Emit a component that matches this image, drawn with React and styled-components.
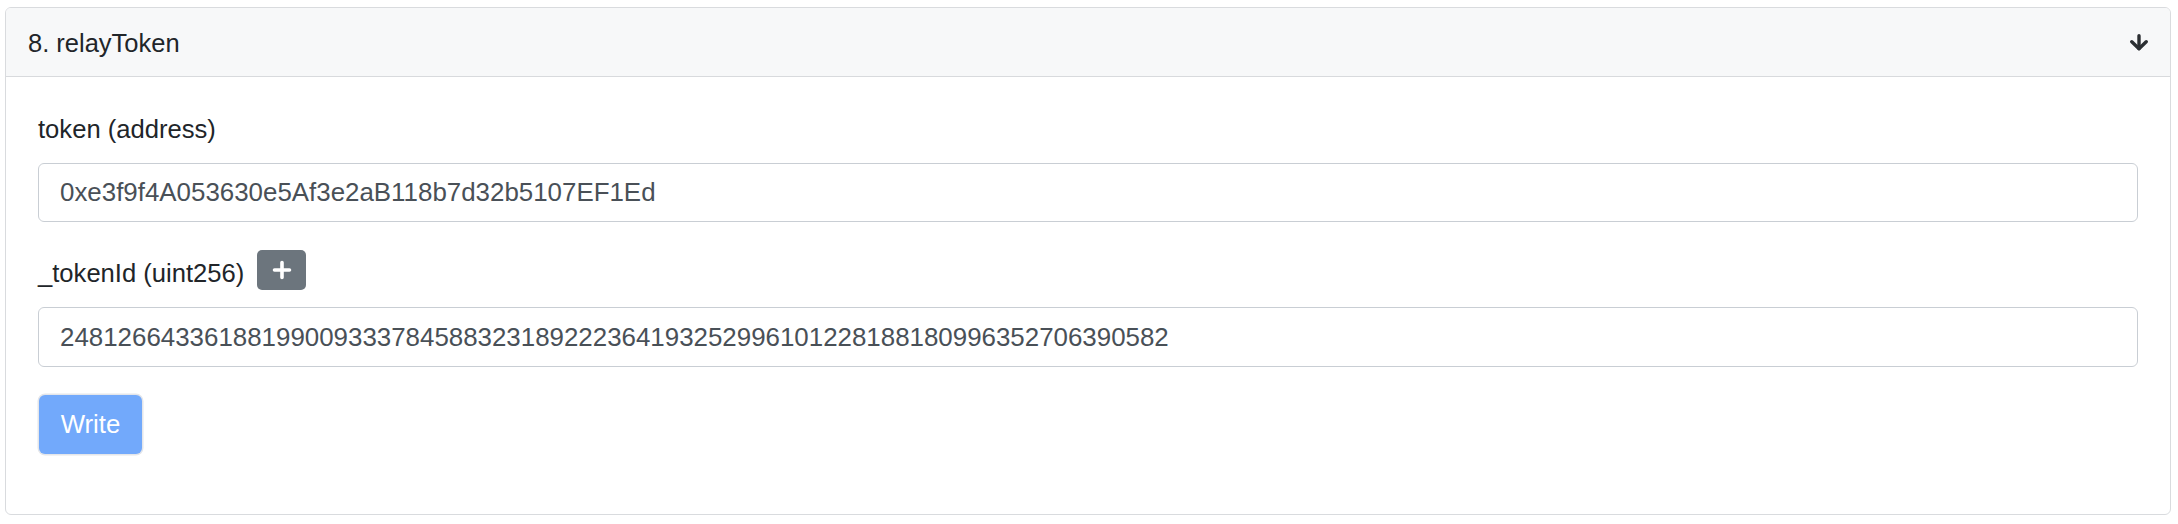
import React from "react";
import styled, { createGlobalStyle } from "styled-components";

const Global = createGlobalStyle`
  html, body { margin: 0; padding: 0; background: #ffffff; }
  body { font-family: "Liberation Sans", Arial, sans-serif; color: #212529; }
  * { box-sizing: border-box; }
`;

const Card = styled.section`
  margin: 7px 0 0 5px;
  width: 2166px;
  height: 508px;
  border: 1px solid #d9dbde;
  border-radius: 6px;
  background: #ffffff;
  overflow: hidden;
  display: flex;
  flex-direction: column;
`;

const Header = styled.header`
  height: 69px;
  flex: none;
  display: flex;
  align-items: center;
  justify-content: space-between;
  padding: 0 21px 0 22px;
  background: #f7f8f9;
  border-bottom: 1px solid #d8dadd;
  font-size: 25.5px;
  color: #212529;
`;

const Title = styled.span`
  line-height: 30px;
  padding-top: 1px;
`;

const Body = styled.div`
  padding: 37px 32px 0 32px;
  display: flex;
  flex-direction: column;
`;

const Field = styled.div`
  display: flex;
  flex-direction: column;
  margin-bottom: ${(p) => p.$gap}px;
`;

const LabelRow = styled.div`
  display: flex;
  align-items: center;
  height: ${(p) => p.$h}px;
  margin-bottom: ${(p) => p.$mb}px;
`;

const Label = styled.label`
  font-size: 25.6px;
  line-height: 30px;
  color: #212529;
  padding-top: ${(p) => p.$pt || 0}px;
`;

const AddButton = styled.button`
  margin-left: 13px;
  width: 49px;
  height: 40px;
  border: none;
  border-radius: 5px;
  background: #6c757d;
  display: flex;
  align-items: center;
  justify-content: center;
  padding: 0;
`;

const Input = styled.input`
  width: 100%;
  height: ${(p) => p.$h}px;
  border: 1px solid #c9ced4;
  border-radius: 6px;
  padding: 0 0 0 21px;
  font-family: "Liberation Sans", Arial, sans-serif;
  font-size: 25.9px;
  color: #495057;
  background: #ffffff;
  outline: none;
`;

const WriteButton = styled.button`
  align-self: flex-start;
  margin-left: 1px;
  width: 103px;
  height: 59px;
  border: none;
  border-radius: 6px;
  background: #72a9fb;
  box-shadow: 0 0 0 1.5px #e4e6ea;
  color: #ffffff;
  font-family: "Liberation Sans", Arial, sans-serif;
  font-size: 25.8px;
  padding: 0;
`;

const ArrowDown = () => (
  <svg width="20" height="17" viewBox="0 0 20 17" fill="none">
    <path d="M10 1.8 V14.5" stroke="#2b2f33" strokeWidth="3.4" strokeLinecap="round" />
    <path d="M2.8 7.8 L10 14.8 L17.2 7.8" stroke="#2b2f33" strokeWidth="3.4" strokeLinecap="round" strokeLinejoin="round" />
  </svg>
);

const Plus = () => (
  <svg width="20" height="20" viewBox="0 0 20 20">
    <path d="M10 2.5 V17.5 M2.5 10 H17.5" stroke="#ffffff" strokeWidth="3.6" strokeLinecap="round" />
  </svg>
);

export default function App() {
  return (
    <>
      <Global />
      <Card>
        <Header>
          <Title>8. relayToken</Title>
          <ArrowDown />
        </Header>
        <Body>
          <Field $gap={28}>
            <LabelRow $h={30} $mb={19}>
              <Label>token (address)</Label>
            </LabelRow>
            <Input $h={59} defaultValue="0xe3f9f4A053630e5Af3e2aB118b7d32b5107EF1Ed" />
          </Field>
          <Field $gap={28}>
            <LabelRow $h={40} $mb={17}>
              <Label $pt={5}>_tokenId (uint256)</Label>
              <AddButton type="button" aria-label="add">
                <Plus />
              </AddButton>
            </LabelRow>
            <Input
              $h={60}
              defaultValue="24812664336188199009333784588323189222364193252996101228188180996352706390582"
            />
          </Field>
          <WriteButton type="button">Write</WriteButton>
        </Body>
      </Card>
    </>
  );
}
